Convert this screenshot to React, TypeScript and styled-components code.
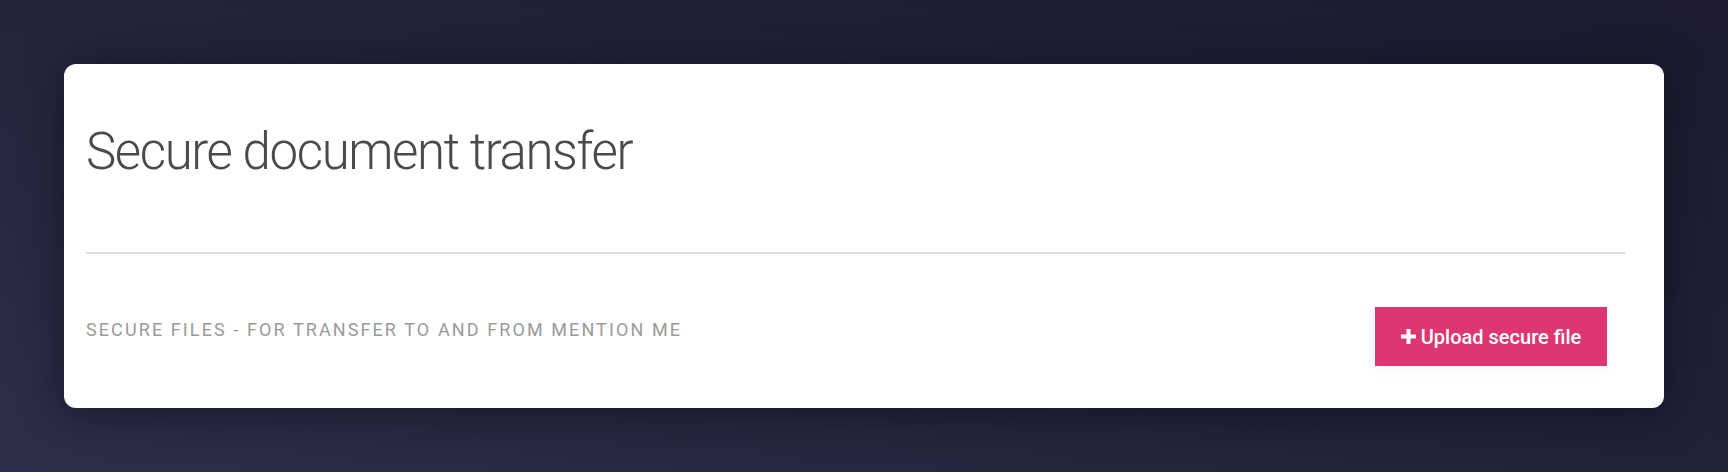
import styled, { createGlobalStyle } from "styled-components";

const GlobalStyle = createGlobalStyle`
    html, body {
        margin: 0;
        padding: 0;
    }
    body {
        font-family: Roboto, "Liberation Sans", Arial, sans-serif;
        background: #1f1f34;
    }
`;

const Page = styled.div`
    width: 1728px;
    height: 472px;
    box-sizing: border-box;
    padding: 64px;
    background: linear-gradient(20deg, #2d2e49 0%, #232339 45%, #1b1a2e 100%);
`;

const Card = styled.div`
    height: 344px;
    box-sizing: border-box;
    padding: 56px 39px 0 22px;
    background: #fff;
    border-radius: 12px;
    box-shadow: 0 6px 40px rgba(10, 10, 24, 0.55);
`;

const Title = styled.h1`
    margin: 0;
    font-weight: 300;
    font-size: 51px;
    line-height: 64px;
    color: #4a4a4a;
    letter-spacing: -1.4px;
`;

const Divider = styled.hr`
    margin: 68px 0 0;
    border: 0;
    height: 2px;
    background: #dedede;
`;

const Row = styled.div`
    display: flex;
    justify-content: space-between;
    align-items: flex-start;
    padding: 53px 18px 0 0;
`;

const Subtitle = styled.p`
    margin: 11px 0 0;
    font-size: 18px;
    line-height: 24px;
    letter-spacing: 2.1px;
    text-transform: uppercase;
    color: #9a9a9a;
`;

const Button = styled.button`
    display: flex;
    align-items: center;
    justify-content: center;
    gap: 5px;
    width: 232px;
    height: 59px;
    border: 0;
    border-radius: 0;
    background: #dd3672;
    color: #fff;
    font-family: Roboto, "Liberation Sans", Arial, sans-serif;
    font-size: 20px;
    font-weight: 500;
    cursor: pointer;
    box-shadow: 0 4px 10px rgba(0, 0, 0, 0.04);
`;

const PlusIcon = () => (
    <svg width="15" height="15" viewBox="0 0 15 15" aria-hidden="true">
        <path d="M5.5 0h4v5.5H15v4H9.5V15h-4V9.5H0v-4h5.5z" fill="#fff" />
    </svg>
);

const App = () => {
    return (
        <>
            <GlobalStyle />
            <Page>
                <Card>
                    <Title>Secure document transfer</Title>
                    <Divider />
                    <Row>
                        <Subtitle>Secure files - for transfer to and from Mention Me</Subtitle>
                        <Button>
                            <PlusIcon />
                            Upload secure file
                        </Button>
                    </Row>
                </Card>
            </Page>
        </>
    );
};

export default App;
